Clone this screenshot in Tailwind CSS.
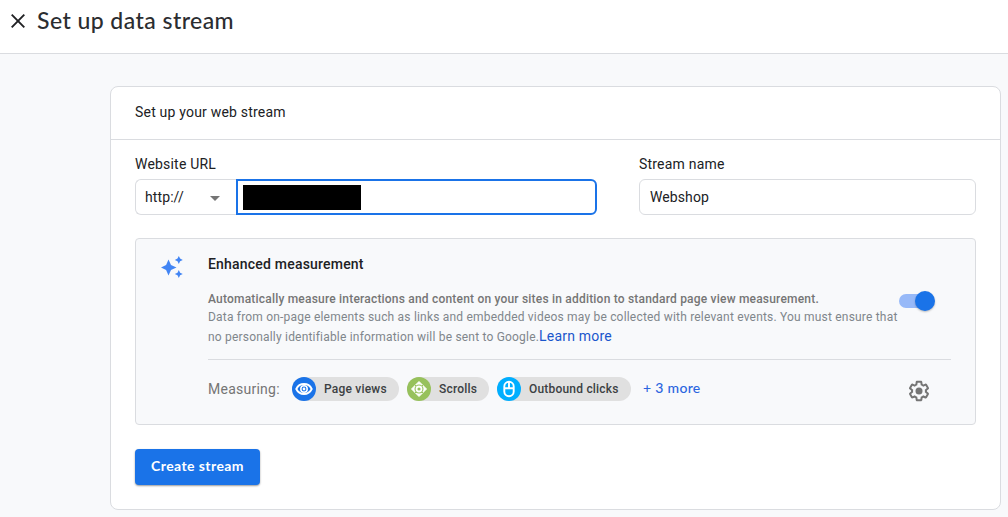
<!DOCTYPE html>
<html lang="en">
<head>
<meta charset="utf-8">
<title>Set up data stream</title>
<script src="https://cdn.jsdelivr.net/npm/@tailwindcss/browser@4"></script>
</head>
<body class="h-[517px] w-[1008px] overflow-hidden bg-[#f8f9fb] font-[Roboto,sans-serif] text-sm text-[#202124]">
<header class="flex h-[54px] items-start border-b border-[#dadce0] bg-white pl-[11px]">
  <svg class="mt-[14px] size-[14px]" viewBox="0 0 14 14" fill="none" stroke="#202124" stroke-width="1.9"><path d="M.7.7l12.6 12.6M13.3.7L.7 13.3"/></svg>
  <h1 class="ml-[12px] mt-[6px] whitespace-nowrap font-[Lato,sans-serif] text-[23px] font-medium leading-7 tracking-[0.44px] text-[#2b2d30]">Set up data stream</h1>
</header>
<main class="ml-[110px] mt-8 h-[424px] w-[891px] rounded-lg border border-[#dadce0] bg-white">
  <h2 class="h-[53px] border-b border-[#dadce0] pl-6 pt-[15px] leading-5 tracking-[0.2px]">Set up your web stream</h2>
  <div class="flex px-6 pt-[14px]">
    <div class="w-[462px]">
      <label class="block leading-5 tracking-[0.2px]">Website URL</label>
      <div class="mt-[5px] flex">
        <div class="flex h-9 w-[101px] items-center rounded-l-md border border-r-0 border-[#dadce0] pl-[9px]">
          <span class="w-[65px] tracking-[0.1px]">http://</span>
          <svg class="mt-[2px] h-[5px] w-[10px]" viewBox="0 0 10 5" fill="#757575"><path d="M0 0h10L5 5z"/></svg>
        </div>
        <div class="flex h-9 w-[361px] items-center rounded-r-md border-2 border-[#1a73e8] pl-[5px]"><div class="h-[25px] w-[118px] bg-black"></div></div>
      </div>
    </div>
    <div class="ml-[42px] w-[337px]">
      <label class="block leading-5 tracking-[0.2px]">Stream name</label>
      <div class="mt-[5px] flex h-9 items-center rounded-md border border-[#dadce0] pl-[10px] tracking-[0.1px]">Webshop</div>
    </div>
  </div>
  <section class="mx-6 mt-[23px] flex h-[187px] w-[841px] rounded border border-[#dadce0] bg-[#f8f9fb]">
    <svg class="ml-[25px] mt-[17px] size-[22px] shrink-0" viewBox="0 0 22 22" fill="#4285f4"><path d="M7.5 3.500L10 9.100l5.500 2.400-5.500 2.400L7.500 19.500l-2.400-5.600L0 11.500l5.100-2.400zM17.800 0l1.300 2.600 2.700 1.300L19.100 5.200l-1.300 2.700-1.300-2.700L13.800 3.900l2.700-1.300zM17.800 14l1.300 2.700 2.700 1.300-2.700 1.300-1.300 2.700-1.300-2.700-2.700-1.300 2.700-1.300z"/></svg>
    <div class="ml-[25px] w-[743px]">
      <h3 class="mt-[15px] font-medium leading-5 tracking-[0.2px]">Enhanced measurement</h3>
      <div class="mt-[16px] flex h-[69px]">
        <div class="w-[691px] whitespace-nowrap text-xs text-[#80868b]">
          <p class="font-medium leading-[18px] tracking-[0.2px] text-[#757575]">Automatically measure interactions and content on your sites in addition to standard page view measurement.</p>
          <p class="leading-[18px] tracking-[0.195px]">Data from on-page elements such as links and embedded videos may be collected with relevant events. You must ensure that</p>
          <p class="leading-5 tracking-[0.195px]">no personally identifiable information will be sent to Google.<a class="text-sm leading-5 text-[#1a56cc]">Learn more</a></p>
        </div>
        <div class="mt-px flex h-5 w-9 items-center">
          <div class="flex h-[14px] w-9 items-center justify-end rounded-full bg-linear-to-r from-[#97b9f8] from-85% to-transparent to-85%"><div class="size-5 shrink-0 rounded-full bg-[#1a73e8] shadow-[0_1px_2px_rgba(0,0,0,0.25)]"></div></div>
        </div>
      </div>
      <div class="flex items-center border-t border-[#dadce0] pt-[17px]">
        <span class="w-[84px] tracking-[0.25px] text-[#757575]">Measuring:</span>
        <div class="flex gap-2 text-xs font-medium tracking-[0.2px] text-[#3c4043]">
          <div class="flex h-6 w-[107px] items-center rounded-full bg-[#e0e0e0]"><svg class="mr-2 size-6 shrink-0" viewBox="0 0 24 24"><circle cx="12" cy="12" r="12" fill="#1a73e8"/><g fill="none" stroke="white"><path stroke-width="1.900" d="M4.300 12C7.400 5.400 16.600 5.400 19.700 12 16.600 18.600 7.400 18.600 4.300 12z"/><circle cx="12" cy="12" r="3.200" stroke-width="1.500"/></g><circle cx="12" cy="12" r="1.400" fill="white"/></svg>Page views</div>
          <div class="flex h-6 w-[82px] items-center rounded-full bg-[#e0e0e0]"><svg class="mr-2 size-6 shrink-0" viewBox="0 0 24 24"><circle cx="12" cy="12" r="12" fill="#97c15c"/><path fill="white" stroke="white" stroke-linejoin="round" d="M12 4.500l7.500 7.500-7.500 7.500L4.500 12z"/><circle cx="12" cy="12" r="4.500" fill="#97c15c"/><path stroke="#97c15c" stroke-width="1" d="M8 8l2 2M16 8l-2 2M8 16l2-2M16 16l-2-2"/><circle cx="12" cy="12" r="2.500" fill="none" stroke="white" stroke-width="1.800"/></svg>Scrolls</div>
          <div class="flex h-6 w-[134px] items-center rounded-full bg-[#e0e0e0]"><svg class="mr-2 size-6 shrink-0" viewBox="0 0 24 24"><circle cx="12" cy="12" r="12" fill="#00aeff"/><g fill="none" stroke="white" stroke-width="1.900"><rect x="7.300" y="4.800" width="9.400" height="14.400" rx="4.700"/><path d="M7 11.300h10M12 5v6"/></g></svg>Outbound clicks</div>
        </div>
        <span class="-mt-[2px] ml-3 font-[Lato,sans-serif] text-sm font-medium tracking-[0.3px] text-[#2b65e0]">+ 3 more</span>
        <svg class="-mb-1 -mt-1 ml-auto mr-5 size-6 translate-y-[2px]" viewBox="0 0 24 24" fill="#757575"><path d="M13.850 22.250h-3.700c-.740 0-1.360-.540-1.450-1.270l-.270-1.890c-.270-.140-.530-.290-.790-.460l-1.800.720c-.700.260-1.470-.030-1.810-.650L2.200 15.530c-.350-.660-.200-1.440.360-1.880l1.530-1.190c-.010-.150-.020-.300-.020-.460 0-.150.010-.310.020-.460l-1.520-1.190c-.590-.450-.740-1.260-.370-1.880l1.850-3.190c.340-.620 1.110-.900 1.790-.630l1.810.730c.260-.170.520-.320.780-.460l.270-1.910c.090-.700.710-1.250 1.440-1.250h3.700c.740 0 1.360.540 1.450 1.270l.270 1.890c.270.140.530.290.790.460l1.800-.720c.710-.260 1.480.030 1.820.650l1.840 3.180c.360.660.200 1.440-.360 1.880l-1.520 1.190c.010.150.020.300.020.460s-.010.310-.020.460l1.520 1.190c.560.450.720 1.230.370 1.860l-1.860 3.220c-.340.620-1.110.900-1.800.630l-1.800-.720c-.260.170-.520.320-.780.460l-.270 1.910c-.100.680-.720 1.220-1.460 1.220zm-3.230-2h2.760l.370-2.550.530-.220c.440-.180.880-.440 1.340-.780l.450-.340 2.380.960 1.380-2.400-2.030-1.580.070-.560c.030-.260.060-.510.060-.780s-.030-.530-.060-.780l-.070-.560 2.030-1.580-1.390-2.400-2.390.960-.450-.350c-.420-.320-.870-.580-1.330-.770l-.520-.220-.370-2.550h-2.760l-.370 2.550-.530.210c-.440.190-.880.440-1.340.790l-.450.330-2.380-.950-1.390 2.390 2.030 1.580-.070.560a7 7 0 0 0-.060.790c0 .260.020.530.060.780l.070.560-2.030 1.580 1.380 2.400 2.390-.960.450.350c.430.330.860.580 1.330.770l.530.220z"/><circle cx="12" cy="12" r="3.500"/></svg>
      </div>
    </div>
  </section>
  <button class="ml-6 mt-6 h-9 w-[125px] whitespace-nowrap rounded bg-[#1a73e8] pb-[2px] font-[Lato,sans-serif] text-sm font-bold tracking-[0.42px] text-white shadow-[0_1px_2px_rgba(0,0,0,0.4)]">Create stream</button>
</main>
</body>
</html>
